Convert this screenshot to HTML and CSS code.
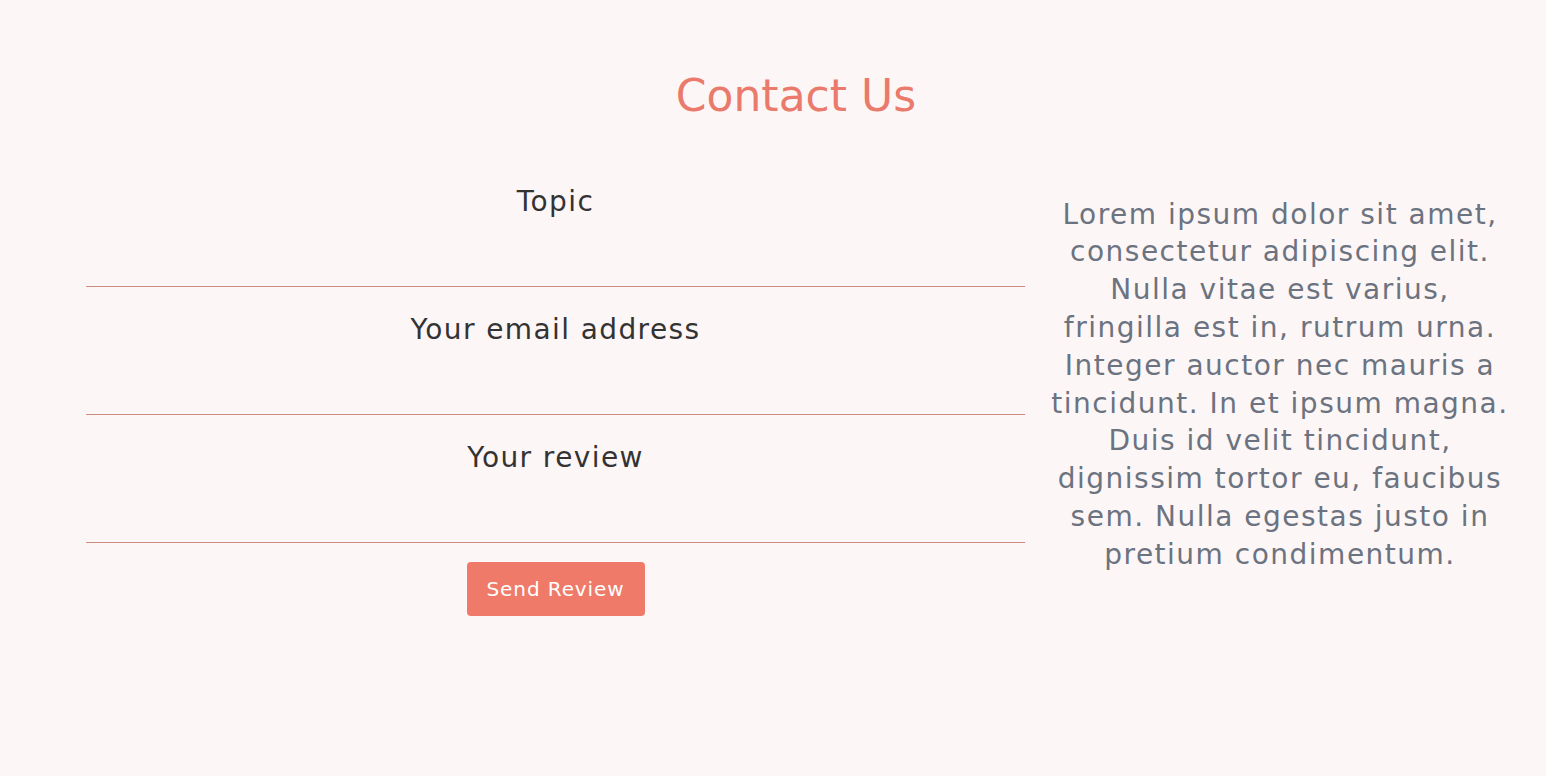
FILE: index.html
```html
<!DOCTYPE html>
<html lang="en">
<head>
<meta charset="utf-8">
<title>Contact Us</title>
<link rel="stylesheet" href="styles.css">
</head>
<body>
<main class="page">
  <h1 class="title">Contact Us</h1>
  <section class="contact">
    <form class="form">
      <textarea class="field" placeholder="Topic"></textarea>
      <textarea class="field" placeholder="Your email address"></textarea>
      <textarea class="field" placeholder="Your review"></textarea>
      <button type="button" class="send">Send Review</button>
    </form>
    <aside class="info">
      <p>Lorem ipsum dolor sit amet, consectetur adipiscing elit. Nulla vitae est varius, fringilla est in, rutrum urna. Integer auctor nec mauris a tincidunt. In et ipsum magna. Duis id velit tincidunt, dignissim tortor eu, faucibus sem. Nulla egestas justo in pretium condimentum.</p>
    </aside>
  </section>
</main>
</body>
</html>
```

FILE: styles.css
```css
html, body {
  margin: 0;
  padding: 0;
  background: #fdf6f6;
}
body {
  font-family: "DejaVu Sans", "Open Sans", sans-serif;
}
.page {
  padding-top: 67px;
}
.title {
  margin: 0;
  padding-left: 46px;
  text-align: center;
  font-size: 44px;
  font-weight: 400;
  line-height: 58px;
  color: #ea7a6b;
}
.contact {
  display: flex;
  align-items: center;
  padding: 0 37px 0 86px;
  margin-top: 34px;
}
.form {
  width: 939px;
  flex: none;
  display: flex;
  flex-direction: column;
  align-items: center;
}
.field {
  display: block;
  width: 100%;
  box-sizing: border-box;
  height: 128px;
  padding: 27px 10px 0;
  border: none;
  border-bottom: 1px solid #cf8a80;
  background: transparent;
  resize: none;
  font-family: inherit;
  font-size: 28px;
  line-height: 32px;
  letter-spacing: 1.4px;
  text-align: center;
  color: #333;
  outline: none;
}
.field::placeholder {
  color: #333;
  opacity: 1;
}
.send {
  margin-top: 19px;
  width: 178px;
  height: 54px;
  border: none;
  border-radius: 4px;
  background: #ef7a69;
  color: #fff;
  font-family: inherit;
  font-size: 20px;
  letter-spacing: 0.9px;
  cursor: pointer;
}
.info {
  flex: 1;
  padding: 0 0 6px 26px;
  text-align: center;
}
.info p {
  margin: 0;
  font-size: 28px;
  line-height: 37.8px;
  color: #6b7380;
  letter-spacing: 1.5px;
}
```
